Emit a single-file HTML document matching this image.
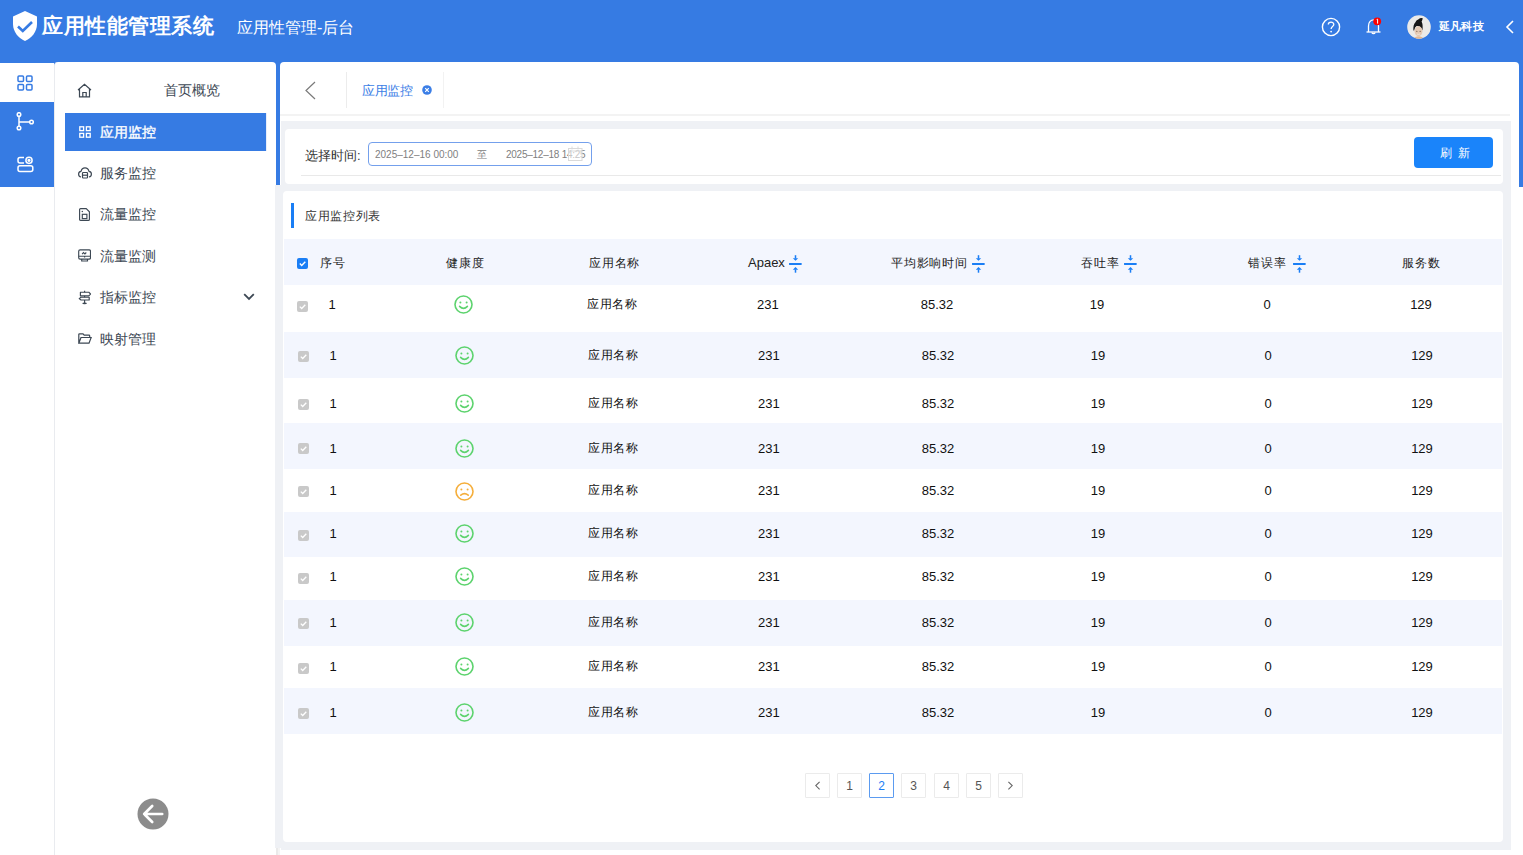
<!DOCTYPE html>
<html><head><meta charset="utf-8">
<style>
*{box-sizing:border-box;margin:0;padding:0}
html,body{width:1523px;height:855px;overflow:hidden;background:#fff;font-family:"Liberation Sans",sans-serif;position:relative}
.a{position:absolute}
.t{position:absolute;white-space:nowrap;line-height:1}
#hdr{left:0;top:0;width:1523px;height:187px;background:#367be3}
#iconbar{left:0;top:63px;width:54px;height:792px;background:#fff}
#iconblue{left:0;top:102px;width:54px;height:85px;background:#367be3}
#nav{left:54px;top:62px;width:222px;height:793px;background:#fff;border-top-left-radius:4px;border-top-right-radius:4px;border-left:1px solid #e9ebef}
#content{left:280px;top:62px;width:1239px;height:793px;background:#fff;border-top-left-radius:4px;border-top-right-radius:4px}
.gray{background:#eff1f5}
.navtxt{font-size:14px;color:#3d4854}
.card{background:#fff;border-radius:4px}
.th{font-size:12px;letter-spacing:0.8px;color:#222}
.td{font-size:13px;color:#111}
.tdc{font-size:12px;letter-spacing:0.8px;color:#111}
.row{left:284px;width:1219px}
.stripe{background:#f3f6fe}
.cb{width:11px;height:11px;border-radius:2px;background:#c9c9c9}
.pg{width:25px;height:25px;border:1px solid #ebebeb;border-radius:1px;font-size:12px;color:#555;text-align:center;line-height:24px}
</style></head><body>
<div id="hdr" class="a"></div>
<!-- logo -->
<svg class="a" style="left:13px;top:11px" width="24" height="30" viewBox="0 0 24 30">
<path d="M12 0 L24 5.5 V13 C24 21 18.5 27 12 30 C5.5 27 0 21 0 13 V5.5 Z" fill="#fff"/>
<path d="M5 15.5 L9.8 20 L19 11" stroke="#367be3" stroke-width="2.6" fill="none"/>
</svg>
<div class="t" style="left:42px;top:15px;font-size:21px;font-weight:bold;letter-spacing:0.5px;color:#fff">应用性能管理系统</div>
<div class="t" style="left:237px;top:20px;font-size:16px;color:#fff">应用性管理-后台</div>
<!-- header right -->
<svg class="a" style="left:1321px;top:17px" width="20" height="20" viewBox="0 0 20 20">
<circle cx="10" cy="10" r="8.6" stroke="#fff" stroke-width="1.4" fill="none"/>
<path d="M7.3 7.6 C7.3 4.4 12.8 4.4 12.8 7.5 C12.8 9.6 10.1 9.6 10.1 12" stroke="#fff" stroke-width="1.3" fill="none"/>
<circle cx="10.1" cy="14.6" r="0.9" fill="#fff"/>
</svg>
<svg class="a" style="left:1366px;top:17px" width="16" height="19" viewBox="0 0 16 19">
<path d="M2.5 15 V9 C2.5 5 5 2.8 7.5 2.8 C10 2.8 12.5 5 12.5 9 V15" stroke="#fff" stroke-width="1.3" fill="none"/>
<path d="M0.5 15 H14.5" stroke="#fff" stroke-width="1.3"/>
<path d="M5.8 15.5 A1.8 1.8 0 0 0 9.2 15.5" stroke="#fff" stroke-width="1.2" fill="none"/>
<circle cx="11.2" cy="4.3" r="3.9" fill="#f00"/>
<path d="M10.6 2.6 L11.6 2.2 V6.6" stroke="#fff" stroke-width="1"/>
</svg>
<svg class="a" style="left:1407px;top:15px" width="24" height="24" viewBox="0 0 24 24">
<defs><clipPath id="av"><circle cx="12" cy="12" r="11.8"/></clipPath></defs>
<g clip-path="url(#av)"><rect width="24" height="24" fill="#ebeae8"/>
<path d="M6.5 24 Q8 21.2 11.6 21.2 Q15.2 21.2 16.8 24 Z" fill="#e2b792"/>
<path d="M6.4 15.5 Q6 9.8 8.3 7.6 Q9 5 11.6 4.2 Q13.4 2.4 15.8 3.2 Q15.4 5.2 14.6 6.6 Q16.2 9.6 15.4 15.5 L14.4 13 Q12.8 10.6 9.6 11 Q7.8 11.8 7.2 15.5 Z" fill="#171717"/>
<ellipse cx="11.5" cy="16.2" rx="3.9" ry="5" fill="#e4c9b3"/>
<ellipse cx="9.8" cy="16.3" rx="0.8" ry="0.5" fill="#7b6352"/><ellipse cx="13.2" cy="16.3" rx="0.8" ry="0.5" fill="#7b6352"/>
<path d="M10 19 Q11.5 20 13 19" stroke="#f3e9e0" stroke-width="0.8" fill="none"/></g>
</svg>
<div class="t" style="left:1439px;top:21px;font-size:11px;font-weight:bold;letter-spacing:0.2px;color:#fff">延凡科技</div>
<svg class="a" style="left:1505px;top:20px" width="10" height="14" viewBox="0 0 10 14">
<path d="M8 1 L2 7 L8 13" stroke="#fff" stroke-width="1.6" fill="none"/>
</svg>

<!-- icon bar -->
<div id="iconbar" class="a"></div>
<div id="iconblue" class="a"></div>
<svg class="a" style="left:17px;top:75px" width="16" height="16" viewBox="0 0 16 16">
<g stroke="#367be3" stroke-width="1.5" fill="none"><rect x="1" y="1" width="5.5" height="5.5" rx="1"/><rect x="9.5" y="1" width="5.5" height="5.5" rx="1"/><rect x="1" y="9.5" width="5.5" height="5.5" rx="1"/><rect x="9.5" y="9.5" width="5.5" height="5.5" rx="1"/></g>
</svg>
<svg class="a" style="left:16px;top:112px" width="19" height="19" viewBox="0 0 19 19">
<g stroke="#fff" stroke-width="1.5" fill="none"><circle cx="3" cy="2.5" r="1.8"/><circle cx="3" cy="16" r="1.8"/><circle cx="15.5" cy="10" r="1.8"/><path d="M3 4.3 V14.2 M3 10 H13.7"/></g>
</svg>
<svg class="a" style="left:17px;top:156px" width="17" height="17" viewBox="0 0 17 17">
<g stroke="#fff" stroke-width="1.5" fill="none"><path d="M7 1.5 H3 Q1 1.5 1 3.5 V5 Q1 7 3 7 H7"/><circle cx="12" cy="4.3" r="3.1"/><circle cx="12" cy="4.3" r="0.9" fill="#fff"/><rect x="1" y="9.8" width="14.8" height="5.8" rx="2"/></g>
</svg>

<!-- nav card -->
<div id="nav" class="a"></div>
<svg class="a" style="left:77px;top:83px" width="15" height="15" viewBox="0 0 15 15">
<g stroke="#3d4854" stroke-width="1.2" fill="none"><path d="M1 7 L7.5 1.2 L14 7 M2.5 5.8 V13.8 H12.5 V5.8 M5.8 13.8 V9.5 H9.2 V13.8"/></g>
</svg>
<div class="t navtxt" style="left:164px;top:83px">首页概览</div>
<div class="a" style="left:65px;top:113px;width:201px;height:38px;background:#367be3"></div>
<div class="a" style="left:266px;top:113px;width:1px;height:38px;background:#e8eefa"></div>
<svg class="a" style="left:79px;top:126px" width="12" height="12" viewBox="0 0 12 12">
<g stroke="#fff" stroke-width="1.3" fill="none"><rect x="0.8" y="0.8" width="3.8" height="3.8"/><rect x="7.4" y="0.8" width="3.8" height="3.8"/><rect x="0.8" y="7.4" width="3.8" height="3.8"/><rect x="7.4" y="7.4" width="3.8" height="3.8"/></g>
</svg>
<div class="t navtxt" style="left:100px;top:125px;color:#fff;-webkit-text-stroke:0.35px #fff">应用监控</div>
<svg class="a" style="left:78px;top:167px" width="14" height="12" viewBox="0 0 14 12">
<g stroke="#3d4854" stroke-width="1.2" fill="none"><path d="M3 10 Q0.6 9.6 0.6 7 Q0.6 4.6 3 4.3 Q3.8 0.8 7 0.8 Q10.2 0.8 11 4.3 Q13.4 4.6 13.4 7 Q13.4 9.6 11 10"/><rect x="4.5" y="5.5" width="5" height="5.5" rx="0.8"/><path d="M4.5 8.2 H9.5"/></g>
</svg>
<div class="t navtxt" style="left:100px;top:166px">服务监控</div>
<svg class="a" style="left:79px;top:208px" width="11" height="13" viewBox="0 0 11 13">
<g stroke="#3d4854" stroke-width="1.15" fill="none"><path d="M1.6 0.6 H7.2 L10.4 3.8 V11.4 Q10.4 12.4 9.4 12.4 H1.6 Q0.6 12.4 0.6 11.4 V1.6 Q0.6 0.6 1.6 0.6 Z"/><rect x="3.3" y="6.3" width="4.6" height="4.3"/></g><circle cx="3.3" cy="3.5" r="0.75" fill="#3d4854"/></svg>
<div class="t navtxt" style="left:100px;top:207px">流量监控</div>
<svg class="a" style="left:78px;top:249px" width="13" height="13" viewBox="0 0 13 13">
<g stroke="#3d4854" stroke-width="1.15" fill="none"><rect x="0.7" y="0.9" width="11.8" height="9.2" rx="1.4"/><path d="M0.7 7.2 H12.5 M6.6 7.2 V8.6 M3.7 10.1 V12 H9.5 V10.1 M4.1 5.1 L5.5 3.6 L6.9 4.9 L8.3 3.5"/></g></svg>
<div class="t navtxt" style="left:100px;top:249px">流量监测</div>
<svg class="a" style="left:78px;top:290px" width="14" height="15" viewBox="0 0 14 15">
<g stroke="#3d4854" stroke-width="1.15" fill="none" stroke-linejoin="round"><path d="M6.6 0.8 V2.2 M6.6 5.8 V7.2 M6.6 10 V13.2"/><path d="M2.4 2.2 H10.8 L12.5 4 L10.8 5.8 H2.4 Z"/><path d="M11.2 7.2 H3 L1.2 8.6 L3 10 H11.2 Z"/></g><ellipse cx="6.6" cy="13.4" rx="2.3" ry="0.8" fill="#3d4854"/></svg>
<div class="t navtxt" style="left:100px;top:290px">指标监控</div>
<svg class="a" style="left:243px;top:293px" width="12" height="8" viewBox="0 0 12 8">
<path d="M1.2 1.2 L6 6 L10.8 1.2" stroke="#3d4854" stroke-width="1.8" fill="none"/>
</svg>
<svg class="a" style="left:78px;top:333px" width="14" height="11" viewBox="0 0 14 11">
<g stroke="#3d4854" stroke-width="1.2" fill="none"><path d="M0.8 10.2 V1.5 Q0.8 0.8 1.5 0.8 H5 L6.2 2.2 H11 Q11.7 2.2 11.7 3 V4.2 M0.8 10.2 L3 4.5 H13.2 L11 10.2 Z"/></g>
</svg>
<div class="t navtxt" style="left:100px;top:332px">映射管理</div>
<svg class="a" style="left:137px;top:798px" width="32" height="32" viewBox="0 0 32 32">
<circle cx="16" cy="16" r="15.5" fill="#8c8c8c"/>
<path d="M7.2 16 H25.2 M15.2 8 L7.2 16 L15.2 24" stroke="#fff" stroke-width="2.7" stroke-linecap="round" stroke-linejoin="round" fill="none"/>
</svg>

<!-- content -->
<div id="content" class="a"></div>
<svg class="a" style="left:304px;top:81px" width="12" height="19" viewBox="0 0 12 19">
<path d="M11 1 L2 9.5 L11 18" stroke="#7a7a7a" stroke-width="1.2" fill="none"/>
</svg>
<div class="a" style="left:346px;top:72px;width:1px;height:36px;background:#ececec"></div>
<div class="t" style="left:362px;top:84px;font-size:13px;letter-spacing:-0.4px;color:#3b7ee6">应用监控</div>
<svg class="a" style="left:421.6px;top:85.2px" width="10" height="10" viewBox="0 0 10 10">
<circle cx="5" cy="5" r="4.8" fill="#3b7ee6"/><path d="M3.2 3.2 L6.8 6.8 M6.8 3.2 L3.2 6.8" stroke="#fff" stroke-width="1.2"/>
</svg>
<div class="a" style="left:443px;top:72px;width:1px;height:36px;background:#f2f2f2"></div>
<div class="a" style="left:280px;top:114px;width:1230px;height:2px;background:#f3f3f3"></div>
<div class="a gray" style="left:281px;top:121px;width:1230px;height:729px"></div>
<div class="a gray" style="left:275px;top:185px;width:6px;height:663px"></div>
<div class="a" style="left:276px;top:62px;width:4px;height:123px;background:#367be3"></div>
<div class="a" style="left:276px;top:848px;width:2px;height:7px;background:#eaeaea"></div><div class="a" style="left:278px;top:848px;width:2px;height:7px;background:#f4f4f4"></div>
<div class="a" style="left:1519px;top:62px;width:4px;height:125px;background:#367be3"></div>

<!-- filter card -->
<div class="a card" style="left:285px;top:129px;width:1218px;height:55px"></div>
<div class="t" style="left:305px;top:149px;font-size:13px;color:#333">选择时间:</div>
<div class="a" style="left:368px;top:142px;width:224px;height:24px;border:1px solid #74a0ec;border-radius:4px"></div>
<div class="t" style="left:375px;top:150px;font-size:10px;color:#808080">2025–12–16 00:00</div>
<div class="t" style="left:477px;top:150px;font-size:10px;color:#808080">至</div>
<div class="t" style="left:506px;top:150px;font-size:10px;letter-spacing:-0.25px;color:#808080">2025–12–18 14:25</div>
<svg class="a" style="left:568px;top:146px" width="15" height="15" viewBox="0 0 15 15">
<g stroke="#dadada" stroke-width="1" fill="none"><rect x="0.5" y="2.5" width="13.5" height="12" fill="rgba(255,255,255,0.55)"/><path d="M0.5 5 H14 M4 0.5 V3.5 M10 0.5 V3.5"/></g></svg>
<div class="a" style="left:301px;top:175px;width:1200px;height:1px;background:#e9e9e9"></div>
<div class="a" style="left:1414px;top:137px;width:79px;height:31px;background:#1a84fa;border-radius:4px"></div>
<div class="t" style="left:1440px;top:147px;font-size:12px;color:#fff;letter-spacing:6px">刷新</div>

<!-- table card -->
<div class="a card" style="left:283px;top:191px;width:1220px;height:651px"></div>
<div class="a" style="left:291px;top:203px;width:3px;height:25px;background:#1a7ef5"></div>
<div class="t" style="left:305px;top:210px;font-size:12px;letter-spacing:0.7px;color:#333">应用监控列表</div>
<div class="a stripe" style="left:284px;top:239px;width:1218px;height:46px"></div>
<div class="a" style="left:297px;top:258px;width:11px;height:11px;border-radius:2px;background:#1a7ef5"></div>
<svg class="a" style="left:297px;top:258px" width="11" height="11" viewBox="0 0 11 11"><path d="M2.8 5.6 L4.7 7.5 L8.3 3.8" stroke="#fff" stroke-width="1.4" fill="none"/></svg>
<div id="thead"><div class="t th" style="left:320px;top:257px;">序号</div><div class="t th" style="left:446px;top:257px;">健康度</div><div class="t th" style="left:589px;top:257px;">应用名称</div><div class="t th" style="left:748px;top:256px;font-size:13px;letter-spacing:0">Apaex</div><div class="t th" style="left:891px;top:257px;">平均影响时间</div><div class="t th" style="left:1081px;top:257px;">吞吐率</div><div class="t th" style="left:1248px;top:257px;">错误率</div><div class="t th" style="left:1402px;top:257px;">服务数</div><svg class="a" style="left:789px;top:254px" width="14" height="20" viewBox="0 0 14 20"><g fill="#1a7ef5"><rect x="5.75" y="1.2" width="1.5" height="3.4"/><path d="M3.8 4.2 H9.2 L6.5 6.8 Z"/><rect x="0" y="8.9" width="12.7" height="2" rx="0.4"/><path d="M3.8 15.8 H9.2 L6.5 12.9 Z"/><rect x="5.75" y="15.4" width="1.5" height="3.3"/></g></svg><svg class="a" style="left:972px;top:254px" width="14" height="20" viewBox="0 0 14 20"><g fill="#1a7ef5"><rect x="5.75" y="1.2" width="1.5" height="3.4"/><path d="M3.8 4.2 H9.2 L6.5 6.8 Z"/><rect x="0" y="8.9" width="12.7" height="2" rx="0.4"/><path d="M3.8 15.8 H9.2 L6.5 12.9 Z"/><rect x="5.75" y="15.4" width="1.5" height="3.3"/></g></svg><svg class="a" style="left:1124px;top:254px" width="14" height="20" viewBox="0 0 14 20"><g fill="#1a7ef5"><rect x="5.75" y="1.2" width="1.5" height="3.4"/><path d="M3.8 4.2 H9.2 L6.5 6.8 Z"/><rect x="0" y="8.9" width="12.7" height="2" rx="0.4"/><path d="M3.8 15.8 H9.2 L6.5 12.9 Z"/><rect x="5.75" y="15.4" width="1.5" height="3.3"/></g></svg><svg class="a" style="left:1293px;top:254px" width="14" height="20" viewBox="0 0 14 20"><g fill="#1a7ef5"><rect x="5.75" y="1.2" width="1.5" height="3.4"/><path d="M3.8 4.2 H9.2 L6.5 6.8 Z"/><rect x="0" y="8.9" width="12.7" height="2" rx="0.4"/><path d="M3.8 15.8 H9.2 L6.5 12.9 Z"/><rect x="5.75" y="15.4" width="1.5" height="3.3"/></g></svg></div>
<div id="tbody"><div class="a cb" style="left:297px;top:301px"></div>
<svg class="a" style="left:297px;top:301px" width="11" height="11" viewBox="0 0 11 11"><path d="M2.8 5.6 L4.7 7.5 L8.3 3.8" stroke="#fff" stroke-width="1.3" fill="none"/></svg>
<div class="t td" style="left:322.0px;top:298px;width:20px;text-align:center">1</div>
<svg class="a" style="left:454px;top:295px" width="19" height="19" viewBox="0 0 19 19"><g stroke="#5dd36e" stroke-width="1.6" fill="none"><circle cx="9.5" cy="9.5" r="8.5"/><path d="M5.6 11.4 Q9.5 15.2 13.4 11.4" stroke-linecap="round"/></g><circle cx="6.4" cy="7.6" r="1" fill="#5dd36e"/><circle cx="12.6" cy="7.6" r="1" fill="#5dd36e"/></svg>
<div class="t tdc" style="left:572.4px;top:298px;width:80px;text-align:center">应用名称</div>
<div class="t td" style="left:737.8px;top:298px;width:60px;text-align:center">231</div>
<div class="t td" style="left:907.0px;top:298px;width:60px;text-align:center">85.32</div>
<div class="t td" style="left:1077.0px;top:298px;width:40px;text-align:center">19</div>
<div class="t td" style="left:1247.0px;top:298px;width:40px;text-align:center">0</div>
<div class="t td" style="left:1401.0px;top:298px;width:40px;text-align:center">129</div>
<div class="a stripe" style="left:284px;top:332px;width:1218px;height:46px"></div>
<div class="a cb" style="left:298px;top:351px"></div>
<svg class="a" style="left:298px;top:351px" width="11" height="11" viewBox="0 0 11 11"><path d="M2.8 5.6 L4.7 7.5 L8.3 3.8" stroke="#fff" stroke-width="1.3" fill="none"/></svg>
<div class="t td" style="left:323.0px;top:349px;width:20px;text-align:center">1</div>
<svg class="a" style="left:455px;top:346px" width="19" height="19" viewBox="0 0 19 19"><g stroke="#5dd36e" stroke-width="1.6" fill="none"><circle cx="9.5" cy="9.5" r="8.5"/><path d="M5.6 11.4 Q9.5 15.2 13.4 11.4" stroke-linecap="round"/></g><circle cx="6.4" cy="7.6" r="1" fill="#5dd36e"/><circle cx="12.6" cy="7.6" r="1" fill="#5dd36e"/></svg>
<div class="t tdc" style="left:573.4px;top:349px;width:80px;text-align:center">应用名称</div>
<div class="t td" style="left:738.8px;top:349px;width:60px;text-align:center">231</div>
<div class="t td" style="left:908.0px;top:349px;width:60px;text-align:center">85.32</div>
<div class="t td" style="left:1078.0px;top:349px;width:40px;text-align:center">19</div>
<div class="t td" style="left:1248.0px;top:349px;width:40px;text-align:center">0</div>
<div class="t td" style="left:1402.0px;top:349px;width:40px;text-align:center">129</div>
<div class="a cb" style="left:298px;top:399px"></div>
<svg class="a" style="left:298px;top:399px" width="11" height="11" viewBox="0 0 11 11"><path d="M2.8 5.6 L4.7 7.5 L8.3 3.8" stroke="#fff" stroke-width="1.3" fill="none"/></svg>
<div class="t td" style="left:323.0px;top:397px;width:20px;text-align:center">1</div>
<svg class="a" style="left:455px;top:394px" width="19" height="19" viewBox="0 0 19 19"><g stroke="#5dd36e" stroke-width="1.6" fill="none"><circle cx="9.5" cy="9.5" r="8.5"/><path d="M5.6 11.4 Q9.5 15.2 13.4 11.4" stroke-linecap="round"/></g><circle cx="6.4" cy="7.6" r="1" fill="#5dd36e"/><circle cx="12.6" cy="7.6" r="1" fill="#5dd36e"/></svg>
<div class="t tdc" style="left:573.4px;top:397px;width:80px;text-align:center">应用名称</div>
<div class="t td" style="left:738.8px;top:397px;width:60px;text-align:center">231</div>
<div class="t td" style="left:908.0px;top:397px;width:60px;text-align:center">85.32</div>
<div class="t td" style="left:1078.0px;top:397px;width:40px;text-align:center">19</div>
<div class="t td" style="left:1248.0px;top:397px;width:40px;text-align:center">0</div>
<div class="t td" style="left:1402.0px;top:397px;width:40px;text-align:center">129</div>
<div class="a stripe" style="left:284px;top:423px;width:1218px;height:46px"></div>
<div class="a cb" style="left:298px;top:443px"></div>
<svg class="a" style="left:298px;top:443px" width="11" height="11" viewBox="0 0 11 11"><path d="M2.8 5.6 L4.7 7.5 L8.3 3.8" stroke="#fff" stroke-width="1.3" fill="none"/></svg>
<div class="t td" style="left:323.0px;top:442px;width:20px;text-align:center">1</div>
<svg class="a" style="left:455px;top:439px" width="19" height="19" viewBox="0 0 19 19"><g stroke="#5dd36e" stroke-width="1.6" fill="none"><circle cx="9.5" cy="9.5" r="8.5"/><path d="M5.6 11.4 Q9.5 15.2 13.4 11.4" stroke-linecap="round"/></g><circle cx="6.4" cy="7.6" r="1" fill="#5dd36e"/><circle cx="12.6" cy="7.6" r="1" fill="#5dd36e"/></svg>
<div class="t tdc" style="left:573.4px;top:442px;width:80px;text-align:center">应用名称</div>
<div class="t td" style="left:738.8px;top:442px;width:60px;text-align:center">231</div>
<div class="t td" style="left:908.0px;top:442px;width:60px;text-align:center">85.32</div>
<div class="t td" style="left:1078.0px;top:442px;width:40px;text-align:center">19</div>
<div class="t td" style="left:1248.0px;top:442px;width:40px;text-align:center">0</div>
<div class="t td" style="left:1402.0px;top:442px;width:40px;text-align:center">129</div>
<div class="a cb" style="left:298px;top:486px"></div>
<svg class="a" style="left:298px;top:486px" width="11" height="11" viewBox="0 0 11 11"><path d="M2.8 5.6 L4.7 7.5 L8.3 3.8" stroke="#fff" stroke-width="1.3" fill="none"/></svg>
<div class="t td" style="left:323.0px;top:484px;width:20px;text-align:center">1</div>
<svg class="a" style="left:455px;top:482px" width="19" height="19" viewBox="0 0 19 19"><g stroke="#f5ae3b" stroke-width="1.6" fill="none"><circle cx="9.5" cy="9.5" r="8.5"/><path d="M5.8 13.2 Q9.5 10.2 13.2 13.2" stroke-linecap="round"/></g><circle cx="6.4" cy="7.6" r="1" fill="#f5ae3b"/><circle cx="12.6" cy="7.6" r="1" fill="#f5ae3b"/></svg>
<div class="t tdc" style="left:573.4px;top:484px;width:80px;text-align:center">应用名称</div>
<div class="t td" style="left:738.8px;top:484px;width:60px;text-align:center">231</div>
<div class="t td" style="left:908.0px;top:484px;width:60px;text-align:center">85.32</div>
<div class="t td" style="left:1078.0px;top:484px;width:40px;text-align:center">19</div>
<div class="t td" style="left:1248.0px;top:484px;width:40px;text-align:center">0</div>
<div class="t td" style="left:1402.0px;top:484px;width:40px;text-align:center">129</div>
<div class="a stripe" style="left:284px;top:512px;width:1218px;height:45px"></div>
<div class="a cb" style="left:298px;top:530px"></div>
<svg class="a" style="left:298px;top:530px" width="11" height="11" viewBox="0 0 11 11"><path d="M2.8 5.6 L4.7 7.5 L8.3 3.8" stroke="#fff" stroke-width="1.3" fill="none"/></svg>
<div class="t td" style="left:323.0px;top:527px;width:20px;text-align:center">1</div>
<svg class="a" style="left:455px;top:524px" width="19" height="19" viewBox="0 0 19 19"><g stroke="#5dd36e" stroke-width="1.6" fill="none"><circle cx="9.5" cy="9.5" r="8.5"/><path d="M5.6 11.4 Q9.5 15.2 13.4 11.4" stroke-linecap="round"/></g><circle cx="6.4" cy="7.6" r="1" fill="#5dd36e"/><circle cx="12.6" cy="7.6" r="1" fill="#5dd36e"/></svg>
<div class="t tdc" style="left:573.4px;top:527px;width:80px;text-align:center">应用名称</div>
<div class="t td" style="left:738.8px;top:527px;width:60px;text-align:center">231</div>
<div class="t td" style="left:908.0px;top:527px;width:60px;text-align:center">85.32</div>
<div class="t td" style="left:1078.0px;top:527px;width:40px;text-align:center">19</div>
<div class="t td" style="left:1248.0px;top:527px;width:40px;text-align:center">0</div>
<div class="t td" style="left:1402.0px;top:527px;width:40px;text-align:center">129</div>
<div class="a cb" style="left:298px;top:573px"></div>
<svg class="a" style="left:298px;top:573px" width="11" height="11" viewBox="0 0 11 11"><path d="M2.8 5.6 L4.7 7.5 L8.3 3.8" stroke="#fff" stroke-width="1.3" fill="none"/></svg>
<div class="t td" style="left:323.0px;top:570px;width:20px;text-align:center">1</div>
<svg class="a" style="left:455px;top:567px" width="19" height="19" viewBox="0 0 19 19"><g stroke="#5dd36e" stroke-width="1.6" fill="none"><circle cx="9.5" cy="9.5" r="8.5"/><path d="M5.6 11.4 Q9.5 15.2 13.4 11.4" stroke-linecap="round"/></g><circle cx="6.4" cy="7.6" r="1" fill="#5dd36e"/><circle cx="12.6" cy="7.6" r="1" fill="#5dd36e"/></svg>
<div class="t tdc" style="left:573.4px;top:570px;width:80px;text-align:center">应用名称</div>
<div class="t td" style="left:738.8px;top:570px;width:60px;text-align:center">231</div>
<div class="t td" style="left:908.0px;top:570px;width:60px;text-align:center">85.32</div>
<div class="t td" style="left:1078.0px;top:570px;width:40px;text-align:center">19</div>
<div class="t td" style="left:1248.0px;top:570px;width:40px;text-align:center">0</div>
<div class="t td" style="left:1402.0px;top:570px;width:40px;text-align:center">129</div>
<div class="a stripe" style="left:284px;top:600px;width:1218px;height:46px"></div>
<div class="a cb" style="left:298px;top:618px"></div>
<svg class="a" style="left:298px;top:618px" width="11" height="11" viewBox="0 0 11 11"><path d="M2.8 5.6 L4.7 7.5 L8.3 3.8" stroke="#fff" stroke-width="1.3" fill="none"/></svg>
<div class="t td" style="left:323.0px;top:616px;width:20px;text-align:center">1</div>
<svg class="a" style="left:455px;top:613px" width="19" height="19" viewBox="0 0 19 19"><g stroke="#5dd36e" stroke-width="1.6" fill="none"><circle cx="9.5" cy="9.5" r="8.5"/><path d="M5.6 11.4 Q9.5 15.2 13.4 11.4" stroke-linecap="round"/></g><circle cx="6.4" cy="7.6" r="1" fill="#5dd36e"/><circle cx="12.6" cy="7.6" r="1" fill="#5dd36e"/></svg>
<div class="t tdc" style="left:573.4px;top:616px;width:80px;text-align:center">应用名称</div>
<div class="t td" style="left:738.8px;top:616px;width:60px;text-align:center">231</div>
<div class="t td" style="left:908.0px;top:616px;width:60px;text-align:center">85.32</div>
<div class="t td" style="left:1078.0px;top:616px;width:40px;text-align:center">19</div>
<div class="t td" style="left:1248.0px;top:616px;width:40px;text-align:center">0</div>
<div class="t td" style="left:1402.0px;top:616px;width:40px;text-align:center">129</div>
<div class="a cb" style="left:298px;top:663px"></div>
<svg class="a" style="left:298px;top:663px" width="11" height="11" viewBox="0 0 11 11"><path d="M2.8 5.6 L4.7 7.5 L8.3 3.8" stroke="#fff" stroke-width="1.3" fill="none"/></svg>
<div class="t td" style="left:323.0px;top:660px;width:20px;text-align:center">1</div>
<svg class="a" style="left:455px;top:657px" width="19" height="19" viewBox="0 0 19 19"><g stroke="#5dd36e" stroke-width="1.6" fill="none"><circle cx="9.5" cy="9.5" r="8.5"/><path d="M5.6 11.4 Q9.5 15.2 13.4 11.4" stroke-linecap="round"/></g><circle cx="6.4" cy="7.6" r="1" fill="#5dd36e"/><circle cx="12.6" cy="7.6" r="1" fill="#5dd36e"/></svg>
<div class="t tdc" style="left:573.4px;top:660px;width:80px;text-align:center">应用名称</div>
<div class="t td" style="left:738.8px;top:660px;width:60px;text-align:center">231</div>
<div class="t td" style="left:908.0px;top:660px;width:60px;text-align:center">85.32</div>
<div class="t td" style="left:1078.0px;top:660px;width:40px;text-align:center">19</div>
<div class="t td" style="left:1248.0px;top:660px;width:40px;text-align:center">0</div>
<div class="t td" style="left:1402.0px;top:660px;width:40px;text-align:center">129</div>
<div class="a stripe" style="left:284px;top:688px;width:1218px;height:46px"></div>
<div class="a cb" style="left:298px;top:708px"></div>
<svg class="a" style="left:298px;top:708px" width="11" height="11" viewBox="0 0 11 11"><path d="M2.8 5.6 L4.7 7.5 L8.3 3.8" stroke="#fff" stroke-width="1.3" fill="none"/></svg>
<div class="t td" style="left:323.0px;top:706px;width:20px;text-align:center">1</div>
<svg class="a" style="left:455px;top:703px" width="19" height="19" viewBox="0 0 19 19"><g stroke="#5dd36e" stroke-width="1.6" fill="none"><circle cx="9.5" cy="9.5" r="8.5"/><path d="M5.6 11.4 Q9.5 15.2 13.4 11.4" stroke-linecap="round"/></g><circle cx="6.4" cy="7.6" r="1" fill="#5dd36e"/><circle cx="12.6" cy="7.6" r="1" fill="#5dd36e"/></svg>
<div class="t tdc" style="left:573.4px;top:706px;width:80px;text-align:center">应用名称</div>
<div class="t td" style="left:738.8px;top:706px;width:60px;text-align:center">231</div>
<div class="t td" style="left:908.0px;top:706px;width:60px;text-align:center">85.32</div>
<div class="t td" style="left:1078.0px;top:706px;width:40px;text-align:center">19</div>
<div class="t td" style="left:1248.0px;top:706px;width:40px;text-align:center">0</div>
<div class="t td" style="left:1402.0px;top:706px;width:40px;text-align:center">129</div></div>
<!-- pagination -->
<div id="pager"><div class="a pg" style="left:805px;top:773px;"><svg width="23" height="23" viewBox="0 0 23 23" style="display:block"><path d="M13.6 7.8 L9.8 11.6 L13.6 15.4" stroke="#666" stroke-width="1.1" fill="none"/></svg></div>
<div class="a pg" style="left:837px;top:773px;">1</div>
<div class="a pg" style="left:869px;top:773px;border-color:#5b9bf0;color:#1a7ef5;">2</div>
<div class="a pg" style="left:901px;top:773px;">3</div>
<div class="a pg" style="left:934px;top:773px;">4</div>
<div class="a pg" style="left:966px;top:773px;">5</div>
<div class="a pg" style="left:998px;top:773px;"><svg width="23" height="23" viewBox="0 0 23 23" style="display:block"><path d="M9.4 7.8 L13.2 11.6 L9.4 15.4" stroke="#666" stroke-width="1.1" fill="none"/></svg></div></div>
</body></html>
